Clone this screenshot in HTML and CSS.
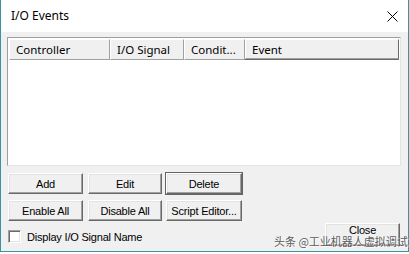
FILE: index.html
```html
<!DOCTYPE html>
<html>
<head>
<meta charset="utf-8">
<link rel="stylesheet" href="styles.css">
</head>
<body>
<div class="window">
  <div class="titlebar">
    <span class="title">I/O Events</span>
    <svg class="close-x" width="11" height="11" viewBox="0 0 11 11"><path d="M0.5 0.5 L10.5 10.5 M10.5 0.5 L0.5 10.5" stroke="#000" stroke-width="1" fill="none"/></svg>
  </div>
  <div class="content">
    <div class="list">
      <div class="header">
        <div class="col c1">Controller</div>
        <div class="col c2">I/O Signal</div>
        <div class="col c3">Condit...</div>
        <div class="col c4">Event</div>
      </div>
    </div>
    <div class="btn-grid">
      <div class="btn">Add</div>
      <div class="btn">Edit</div>
      <div class="btn default">Delete</div>
      <div class="btn">Enable All</div>
      <div class="btn">Disable All</div>
      <div class="btn">Script Editor...</div>
    </div>
    <div class="bottom">
      <label class="check"><span class="box"></span><span>Display I/O Signal Name</span></label>
      <div class="btn close">Close</div>
    </div>
  </div>
  <div class="watermark">头条 @工业机器人虚拟调试</div>
</div>
</body>
</html>
```
FILE: styles.css
```css
* { box-sizing: border-box; }
html, body { margin: 0; padding: 0; background: #ffffff; }
body { width: 409px; height: 254px; overflow: hidden; }

.window {
  position: relative;
  width: 409px;
  height: 252px;
  border-left: 1px solid #3a93a0;
  border-right: 1px solid #3a93a0;
  border-bottom: 1px solid #3a93a0;
  background: #f0f0f0;
  display: flex;
  flex-direction: column;
}

.titlebar {
  height: 32px;
  background: #ffffff;
  display: flex;
  align-items: center;
  justify-content: space-between;
  padding: 0 10px 0 10px;
  flex: none;
}
.title {
  font-family: "Noto Sans", "Open Sans", sans-serif;
  font-size: 12px;
  color: #000;
  margin-top: -1px;
}
.close-x { display: block; margin-top: 1px; }

.content {
  flex: 1;
  padding: 5px 7px 0 6px;
  display: flex;
  flex-direction: column;
}

.list {
  width: 394px;
  height: 129px;
  border: 1px solid #a0a0a0;
  border-right-color: #e3e3e3;
  border-bottom-color: #e3e3e3;
  background: #ffffff;
  padding: 1px;
}
.header {
  display: flex;
  height: 21px;
  background: #f0f0f0;
  font-family: "Noto Sans", "Open Sans", sans-serif;
  font-size: 11.5px;
  color: #000;
  box-shadow: inset -1px -1px 0 #696969;
}
.col {
  height: 21px;
  padding: 0 0 0 6px;
  line-height: 19px;
  border-top: 1px solid #ffffff;
  border-left: 1px solid #ffffff;
  border-right: 1px solid #a0a0a0;
  border-bottom: 1px solid #a0a0a0;
  white-space: nowrap;
  overflow: hidden;
}
.c1 { width: 101px; }
.c2 { width: 74px; }
.c3 { width: 61px; }
.c4 { width: 154px; border-right-color: #696969; border-bottom-color: #a0a0a0; margin-bottom: 1px; height: 20px; }

.btn-grid {
  margin-top: 7px;
  margin-left: 1px;
  display: grid;
  grid-template-columns: 75px 75px 76px;
  column-gap: 4px;
  row-gap: 6px;
}
.btn {
  height: 21px;
  background: #f0f0f0;
  border: 1px solid;
  border-color: #ffffff #696969 #696969 #ffffff;
  box-shadow: inset -1px -1px 0 #a0a0a0, inset 1px 1px 0 #e3e3e3;
  font-family: "Liberation Sans", Arial, sans-serif;
  font-size: 11px;
  letter-spacing: -0.2px;
  color: #000;
  display: flex;
  align-items: center;
  justify-content: center;
  padding-top: 1px;
}
.btn-grid .btn:nth-child(2) { margin-left: 1px; }
.btn-grid .btn:nth-child(5) { margin-left: 1px; }
.btn.default {
  outline: 1px solid #646464;
  outline-offset: 0;
  border-color: #ffffff #696969 #696969 #ffffff;
}

.bottom {
  margin-top: 2px;
  display: flex;
  justify-content: space-between;
  align-items: flex-start;
}
.check {
  margin-top: 7px;
  margin-left: 1px;
  display: flex;
  align-items: center;
  gap: 6px;
  font-family: "Liberation Sans", Arial, sans-serif;
  font-size: 11px;
  letter-spacing: -0.2px;
  color: #000;
}
.box {
  width: 13px;
  height: 13px;
  background: #ffffff;
  border: 1px solid;
  border-color: #a0a0a0 #ffffff #ffffff #a0a0a0;
  box-shadow: inset 1px 1px 0 #696969, inset -1px -1px 0 #e3e3e3;
}
.btn.close {
  width: 75px;
  height: 23px;
  margin-right: 1px;
  align-items: flex-start;
  padding-top: 1px;
  line-height: 11px;
}

.watermark {
  position: absolute;
  left: 273px;
  top: 236px;
  font-family: "Noto Sans CJK SC", sans-serif;
  font-size: 11px;
  line-height: 11px;
  color: #5c5c5c;
  text-shadow: 1px 1px 0 rgba(255,255,255,0.7), -1px 0 0 rgba(255,255,255,0.5);
  white-space: nowrap;
}
```
